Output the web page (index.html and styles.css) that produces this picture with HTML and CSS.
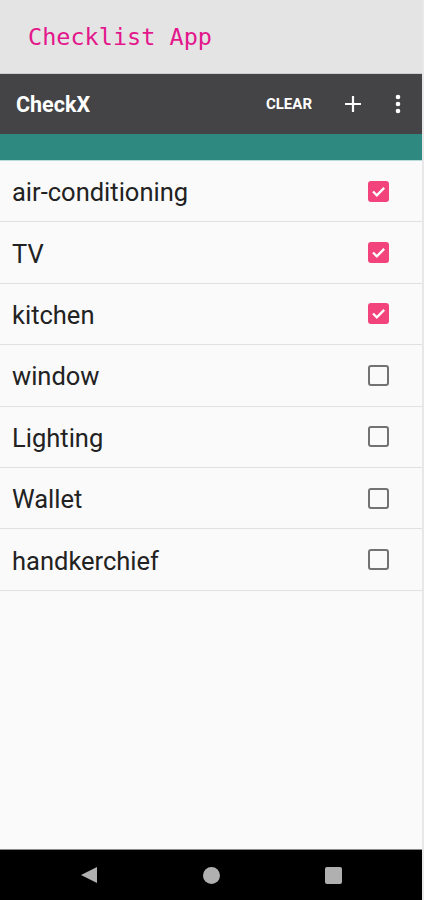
FILE: index.html
```html
<!DOCTYPE html>
<html lang="en">
<head>
    <meta charset="UTF-8">
    <meta name="viewport" content="width=device-width, initial-scale=1.0">
    <title>Checklist App</title>
    <link rel="stylesheet" href="styles.css">
</head>
<body>

    <div class="screen">
        <div class="title-bar">Checklist App</div>

        <div class="toolbar">
            <span class="toolbar-title">CheckX</span>
            <span class="toolbar-clear">CLEAR</span>
            <svg class="toolbar-icon" width="18" height="18" viewBox="0 0 18 18">
                <path d="M9 1v16M1 9h16" stroke="#fff" stroke-width="2.2" fill="none"/>
            </svg>
            <svg class="toolbar-icon toolbar-more" width="6" height="20" viewBox="0 0 6 20">
                <circle cx="3" cy="3" r="2.3" fill="#fff"/>
                <circle cx="3" cy="10" r="2.3" fill="#fff"/>
                <circle cx="3" cy="17" r="2.3" fill="#fff"/>
            </svg>
        </div>

        <div class="tab-strip"></div>

        <div class="list">
            <div class="row">
                <span class="label">air-conditioning</span>
                <span class="check checked"><svg width="21" height="21" viewBox="0 0 21 21"><path d="M5 10.5l3.8 3.8 7.4-7.4" stroke="#fff" stroke-width="2.3" fill="none"/></svg></span>
            </div>
            <div class="row">
                <span class="label">TV</span>
                <span class="check checked"><svg width="21" height="21" viewBox="0 0 21 21"><path d="M5 10.5l3.8 3.8 7.4-7.4" stroke="#fff" stroke-width="2.3" fill="none"/></svg></span>
            </div>
            <div class="row">
                <span class="label">kitchen</span>
                <span class="check checked"><svg width="21" height="21" viewBox="0 0 21 21"><path d="M5 10.5l3.8 3.8 7.4-7.4" stroke="#fff" stroke-width="2.3" fill="none"/></svg></span>
            </div>
            <div class="row">
                <span class="label">window</span>
                <span class="check"></span>
            </div>
            <div class="row">
                <span class="label">Lighting</span>
                <span class="check"></span>
            </div>
            <div class="row">
                <span class="label">Wallet</span>
                <span class="check"></span>
            </div>
            <div class="row">
                <span class="label">handkerchief</span>
                <span class="check"></span>
            </div>
        </div>

        <div class="nav-bar">
            <div class="nav-cell"><span class="nav-back"></span></div>
            <div class="nav-cell"><span class="nav-home"></span></div>
            <div class="nav-cell"><span class="nav-recent"></span></div>
        </div>
    </div>

</body>
</html>
```

FILE: styles.css
```css
/* --- Page --- */
body {
    margin: 0;
    background-color: #e8e8e8;
    font-family: Roboto, "Liberation Sans", sans-serif;
}

.screen {
    width: 422px;
    height: 900px;
    display: flex;
    flex-direction: column;
    overflow: hidden;
}

/* --- Title bar (top) --- */
.title-bar {
    height: 74px;
    box-sizing: border-box;
    padding: 21px 0 0 28px;
    background-color: #e4e4e4;
    border-bottom: 1px solid #cdcdcd;
    font-family: "DejaVu Sans Mono", "Liberation Mono", monospace;
    font-size: 23.5px;
    line-height: 32px;
    color: #e3178b;
}

/* --- Toolbar --- */
.toolbar {
    height: 60px;
    display: flex;
    align-items: center;
    padding: 0 0 0 16px;
    background-color: #444446;
    color: white;
}

.toolbar-title {
    flex: 1;
    font-size: 21.5px;
    font-weight: 700;
}

.toolbar-clear {
    font-size: 15px;
    font-weight: 700;
    margin-right: 32px;
}

.toolbar-icon {
    margin-right: 33px;
}

.toolbar-more {
    margin-right: 21px;
}

.tab-strip {
    height: 26px;
    background-color: #2e8a80;
    border-bottom: 1px solid #b9ddd8;
}

/* --- List --- */
.list {
    flex: 1;
    background-color: #fafafa;
}

.row {
    height: 61.4px;
    box-sizing: border-box;
    display: flex;
    align-items: center;
    justify-content: space-between;
    padding: 2px 33px 0 12px;
    border-bottom: 1px solid #e1e1e1;
}

.label {
    font-size: 25.5px;
    color: #222;
}

.check {
    width: 21px;
    height: 21px;
    box-sizing: border-box;
    border: 2px solid #727272;
    border-radius: 3px;
    margin-top: -2px;
}

.check.checked {
    border: none;
    background-color: #f2437c;
}

.check svg {
    display: block;
}

/* --- Navigation bar --- */
.nav-bar {
    height: 51px;
    flex-shrink: 0;
    display: flex;
    justify-content: center;
    align-items: center;
    background-color: #000;
    border-top: 1px solid #8a8a8a;
    box-sizing: border-box;
}

.nav-cell {
    width: 122px;
    display: flex;
    justify-content: center;
}

.nav-back {
    width: 0;
    height: 0;
    border-top: 8.5px solid transparent;
    border-bottom: 8.5px solid transparent;
    border-right: 16px solid #b0b0b0;
}

.nav-home {
    width: 17px;
    height: 17px;
    border-radius: 50%;
    background-color: #b0b0b0;
}

.nav-recent {
    width: 17px;
    height: 17px;
    border-radius: 2px;
    background-color: #b0b0b0;
}
```
